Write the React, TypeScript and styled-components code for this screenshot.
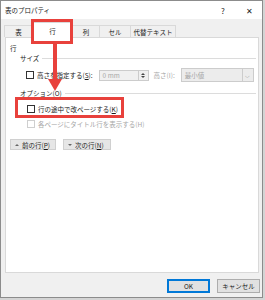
import React from 'react'
import styled, { createGlobalStyle } from 'styled-components'

const GlobalStyle = createGlobalStyle`
  html, body {
    margin: 0;
    padding: 0;
    background: #d4d4d4;
  }
  body {
    font-family: "Noto Sans CJK JP", "Noto Sans", sans-serif;
    font-size: 6.5px;
    color: #1a1a1a;
  }
`

const red = '#e8413c'

const Window = styled.div`
  position: relative;
  width: 261px;
  height: 296px;
  border: 1px solid #8c8c8c;
  background: #f0f0f0;
  display: flex;
  flex-direction: column;
  overflow: hidden;
`

const TitleBar = styled.div`
  height: 18px;
  background: #fff;
  display: flex;
  align-items: center;
  padding-left: 4px;
  font-size: 6.5px;
`

const Title = styled.span`
  flex: 1;
`

const TitleButton = styled.span`
  width: 26px;
  text-align: center;
  font-size: 8px;
  color: #222;
`

const TabStrip = styled.div`
  display: flex;
  align-items: flex-end;
  height: 18px;
  padding-left: 4px;
`

const Tab = styled.div<{ w: number; active?: boolean }>`
  width: ${({ w }) => w}px;
  height: ${({ active }) => (active ? 16 : 12)}px;
  box-sizing: border-box;
  display: flex;
  align-items: center;
  justify-content: center;
  background: ${({ active }) => (active ? '#fff' : '#f0f0f0')};
  border: 1px solid #d9d9d9;
  border-bottom: none;
  margin-left: -1px;
  position: relative;
  z-index: ${({ active }) => (active ? 2 : 1)};
  margin-bottom: ${({ active }) => (active ? -1 : 0)}px;
`

const Panel = styled.div`
  margin: 0 3px 0 4px;
  height: 236px;
  box-sizing: border-box;
  background: #fff;
  border: 1px solid #d9d9d9;
  padding: 5px 0 0 4px;
  display: flex;
  flex-direction: column;
`

const Heading = styled.div`
  height: 10px;
  line-height: 10px;
`

const GroupLabel = styled.div`
  display: flex;
  align-items: center;
  height: 10px;
  padding-left: 10px;
  margin-right: 2px;
  gap: 3px;
  &::after {
    content: '';
    flex: 1;
    height: 1px;
    background: #dcdcdc;
  }
`

const SizeRow = styled.div`
  display: flex;
  align-items: center;
  height: 14px;
  margin: 5px 0 6px 16px;
`

const Check = styled.span<{ disabled?: boolean }>`
  width: 6px;
  height: 6px;
  border: 1px solid ${({ disabled }) => (disabled ? '#cfcfcf' : '#333')};
  background: #fff;
  flex-shrink: 0;
`

const CheckLabel = styled.span<{ disabled?: boolean }>`
  margin-left: 3px;
  color: ${({ disabled }) => (disabled ? '#a6a6a6' : '#1a1a1a')};
  white-space: nowrap;
`

const Spin = styled.div`
  margin-left: 6px;
  width: 50px;
  height: 11px;
  box-sizing: border-box;
  border: 1px solid #cccccc;
  background: #f0f0f0;
  display: flex;
  align-items: center;
  color: #a6a6a6;
`

const SpinText = styled.span`
  flex: 1;
  padding-left: 3px;
`

const SpinArrows = styled.div`
  width: 9px;
  height: 100%;
  border-left: 1px solid #cccccc;
  display: flex;
  flex-direction: column;
  align-items: center;
  justify-content: center;
  gap: 1px;
`

const Tri = styled.span<{ up?: boolean; color?: string }>`
  width: 0;
  height: 0;
  border-left: 2px solid transparent;
  border-right: 2px solid transparent;
  ${({ up, color }) =>
    up
      ? `border-bottom: 2px solid ${color || '#777'};`
      : `border-top: 2px solid ${color || '#777'};`}
`

const FieldLabel = styled.span`
  margin-left: 5px;
  color: #a6a6a6;
  white-space: nowrap;
`

const Select = styled.div`
  margin-left: 6px;
  width: 73px;
  height: 14px;
  box-sizing: border-box;
  border: 1px solid #cccccc;
  background: #ececec;
  display: flex;
  align-items: center;
  color: #a6a6a6;
`

const SelectText = styled.span`
  flex: 1;
  padding-left: 3px;
`

const SelectButton = styled.div`
  width: 10px;
  height: 100%;
  border-left: 1px solid #cccccc;
  display: flex;
  align-items: center;
  justify-content: center;
  font-size: 6px;
  color: #888;
`

const OptionRow = styled.div<{ first?: boolean }>`
  display: flex;
  align-items: center;
  height: 15px;
  padding-left: 17px;
  margin-top: ${({ first }) => (first ? 3 : 0)}px;
`

const NavRow = styled.div`
  display: flex;
  gap: 7px;
  margin-top: 8px;
  padding-left: 0;
`

const NavButton = styled.div<{ w: number }>`
  width: ${({ w }) => w}px;
  height: 11px;
  box-sizing: border-box;
  background: #e6e6e6;
  border: 1px solid #d0d0d0;
  display: flex;
  align-items: center;
  gap: 3px;
  padding-left: 4px;
  white-space: nowrap;
`

const Footer = styled.div`
  display: flex;
  justify-content: flex-end;
  gap: 7px;
  padding: 6px 2px 0 0;
`

const Button = styled.div<{ primary?: boolean }>`
  width: 43px;
  height: 14px;
  box-sizing: border-box;
  background: #e1e1e1;
  border: ${({ primary }) => (primary ? '1px solid #0078d7' : '1px solid #adadad')};
  box-shadow: ${({ primary }) => (primary ? 'inset 0 0 0 1px #0078d7' : 'none')};
  display: flex;
  align-items: center;
  justify-content: center;
`

const Highlight = styled.div<{ x: number; y: number; w: number; h: number }>`
  position: absolute;
  left: ${({ x }) => x}px;
  top: ${({ y }) => y}px;
  width: ${({ w }) => w}px;
  height: ${({ h }) => h}px;
  box-sizing: border-box;
  border: 3px solid ${red};
  z-index: 5;
`

const Arrow = styled.svg`
  position: absolute;
  left: 47px;
  top: 42px;
  z-index: 5;
`

const U = styled.span`
  text-decoration: underline;
`

const tabs = [
  { label: '表', w: 29 },
  { label: '行', w: 41, active: true },
  { label: '列', w: 28 },
  { label: 'セル', w: 32 },
  { label: '代替テキスト', w: 46 },
]

export default function App() {
  return (
    <>
      <GlobalStyle />
      <Window>
        <TitleBar>
          <Title>表のプロパティ</Title>
          <TitleButton>?</TitleButton>
          <TitleButton>✕</TitleButton>
        </TitleBar>
        <TabStrip>
          {tabs.map((t) => (
            <Tab key={t.label} w={t.w} active={t.active}>
              {t.label}
            </Tab>
          ))}
        </TabStrip>
        <Panel>
          <Heading>行</Heading>
          <GroupLabel>サイズ</GroupLabel>
          <SizeRow>
            <Check />
            <CheckLabel>
              高さを指定する(<U>S</U>):
            </CheckLabel>
            <Spin>
              <SpinText>0 mm</SpinText>
              <SpinArrows>
                <Tri up color="#444" />
                <Tri color="#444" />
              </SpinArrows>
            </Spin>
            <FieldLabel>高さ(I):</FieldLabel>
            <Select>
              <SelectText>最小値</SelectText>
              <SelectButton>⌵</SelectButton>
            </Select>
          </SizeRow>
          <GroupLabel>オプション(O)</GroupLabel>
          <OptionRow first>
            <Check />
            <CheckLabel>
              行の途中で改ページする(<U>K</U>)
            </CheckLabel>
          </OptionRow>
          <OptionRow>
            <Check disabled />
            <CheckLabel disabled>各ページにタイトル行を表示する(H)</CheckLabel>
          </OptionRow>
          <NavRow>
            <NavButton w={46}>
              <Tri up color="#666" />
              <span>
                前の行(<U>P</U>)
              </span>
            </NavButton>
            <NavButton w={48}>
              <Tri color="#666" />
              <span>
                次の行(<U>N</U>)
              </span>
            </NavButton>
          </NavRow>
        </Panel>
        <Footer>
          <Button primary>OK</Button>
          <Button>キャンセル</Button>
        </Footer>
        <Highlight x={30} y={18} w={42} h={25} />
        <Highlight x={14} y={96} w={109} h={21} />
        <Arrow width="14" height="48" viewBox="0 0 14 48">
          <rect x="5" y="0" width="4" height="37" fill={red} />
          <polygon points="0,36 14,36 7,48" fill={red} />
        </Arrow>
      </Window>
    </>
  )
}
